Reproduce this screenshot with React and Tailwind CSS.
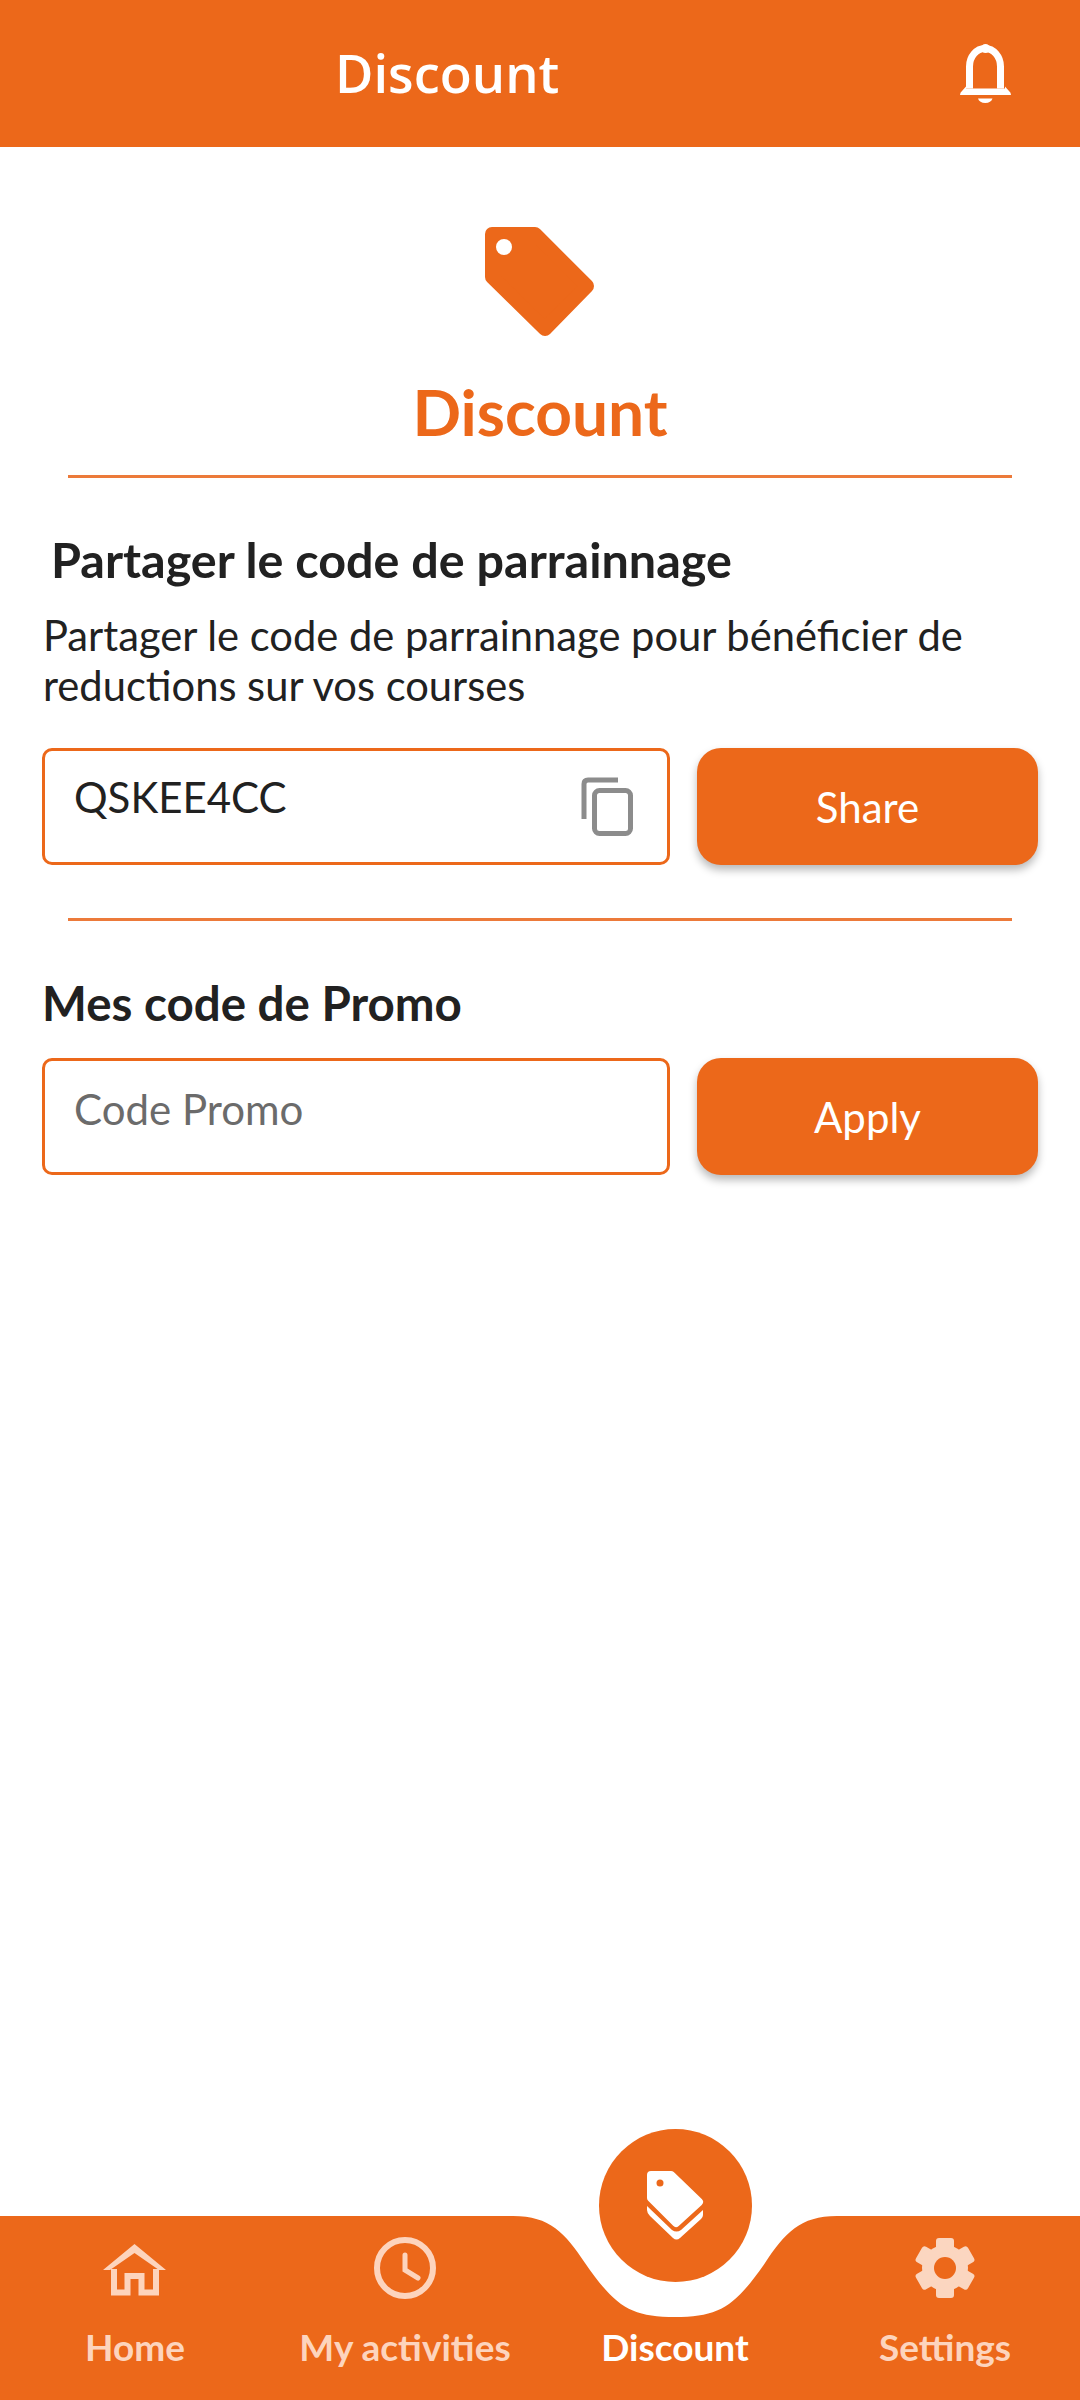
const TagIcon = ({ className }) => (
  <svg viewBox="0 0 110 110" className={className}>
    <path
      d="M7 7 H50 L102 59 L60 102 L7 50 Z"
      fill="#ec681a"
      stroke="#ec681a"
      strokeWidth="14"
      strokeLinejoin="round"
    />
    <circle cx="19" cy="20" r="8" fill="#fff" />
  </svg>
)

const BellIcon = () => (
  <svg viewBox="0 3.500 120 100" className="w-[120px] h-[100px]" fill="#fff">
    <circle cx="56.5" cy="28" r="4.5" />
    <path d="M40.500 68 V46 a15.500 18 0 0 1 31 0 V68" fill="none" stroke="#fff" strokeWidth="7" />
    <path d="M31 74.5 Q31 72 33 70.5 L37 66 V68 H76 V66 L80 70.5 Q82 72 82 74.5 Z" />
    <path d="M49 78 H63.500 a7.500 6 0 0 1 -14.500 0 Z" />
  </svg>
)

const CopyIcon = () => (
  <svg viewBox="0 0 80 70" className="w-[80px] h-[70px]" fill="none" stroke="#8c8c8c" strokeWidth="5">
    <path d="M14 50 V15 Q14 11 18 11 H48" />
    <rect x="24.500" y="21.500" width="36" height="43" rx="5" />
  </svg>
)

const HomeIcon = () => (
  <svg viewBox="5 0 80 70" className="w-[80px] h-[70px]" fill="none" stroke="#fdd4bd">
    <path d="M24 36 V59.500 H37.500 V43 H51.500 V59.500 H66 V36" strokeWidth="6" />
    <path d="M13 37 L44.500 11 L76 37 H69 L44.500 20 L20 37 Z" fill="#fdd4bd" strokeWidth="0" />
  </svg>
)

const ClockIcon = () => (
  <svg viewBox="0 0 70 70" className="w-[70px] h-[70px]" fill="none" stroke="#fdd4bd" strokeLinecap="round">
    <circle cx="35" cy="35" r="28" strokeWidth="6" />
    <path d="M35 22 V37 L48 45" strokeWidth="5" />
  </svg>
)

const GearIcon = () => (
  <svg viewBox="0 0 70 70" className="w-[70px] h-[70px]" fill="#fbd6c0">
    <circle cx="35" cy="35" r="23" />
    {[0, 60, 120, 180, 240, 300].map((deg) => (
      <rect key={deg} x="26" y="5" width="18" height="16" rx="3" transform={`rotate(${deg} 35 35)`} />
    ))}
    <circle cx="35" cy="35" r="11" fill="#ec681a" />
  </svg>
)

const StackedTags = () => (
  <svg viewBox="6 0 80 90" className="w-[80px] h-[90px]" fill="#fff">
    <path
      d="M21 14 H41 L69 41 L46 62 L21 37 Z"
      stroke="#fff"
      strokeWidth="8"
      strokeLinejoin="round"
    />
    <circle cx="30" cy="22" r="3.500" fill="#ec681a" />
    <path d="M17 45 L42 69 Q46.500 72 51 69 L73 49 V54 Q73 56 71 58 L50 77 Q46.500 80 43 77 L20 55 Q17 52 17 49 Z" />
  </svg>
)

const CodeRow = ({ children, button }) => (
  <div className="flex gap-[27px]">
    <div className="relative w-[628px] h-[117px] border-[3px] border-[#ec681a] rounded-[10px] bg-white">
      {children}
    </div>
    <button className="w-[341px] h-[117px] pt-[2px] rounded-[24px] bg-[#ec681a] text-white text-[42px] shadow-[0_5px_8px_rgba(0,0,0,0.28)]">
      {button}
    </button>
  </div>
)

const navItems = [
  { label: 'Home', icon: <HomeIcon /> },
  { label: 'My activities', icon: <ClockIcon /> },
  { label: 'Discount', active: true },
  { label: 'Settings', icon: <GearIcon /> },
]

const App = () => (
  <div className="flex flex-col w-[1080px] h-[2400px] bg-white font-['Lato',sans-serif] text-[#212121]">
    <header className="flex items-center justify-between h-[147px] bg-[#ec681a] pl-[335px] pr-[31px] shrink-0">
      <h1 className="font-['Open_Sans',sans-serif] font-semibold text-[52.5px] text-white">Discount</h1>
      <BellIcon />
    </header>

    <main className="flex-1 px-[42px]">
      <div className="flex flex-col items-center pt-[80px]">
        <TagIcon className="w-[110px] h-[110px]" />
        <h2 className="font-bold text-[64px] leading-[80px] text-[#ec681a] mt-[35px]">
          Discount
        </h2>
      </div>
      <div className="h-[3px] bg-[#ec7a3a] mx-[26px] mt-[23px]" />

      <h3 className="font-bold text-[48.5px] leading-[56px] pl-[9px] mt-[53px]">Partager le code de parrainnage</h3>
      <p className="text-[41.7px] leading-[50px] mt-[23px] pl-px">
        Partager le code de parrainnage pour bénéficier de reductions sur vos courses
      </p>
      <div className="mt-[38px]">
        <CodeRow button="Share">
          <input
            readOnly
            value="QSKEE4CC"
            className="w-full h-full pl-[29px] pr-[100px] pb-[20px] text-[42px] text-[#212121] outline-none bg-transparent"
          />
          <div className="absolute top-[18px] left-[525px]">
            <CopyIcon />
          </div>
        </CodeRow>
      </div>

      <div className="h-[3px] bg-[#ec7a3a] mx-[26px] mt-[53px]" />

      <h3 className="font-bold text-[47.5px] leading-[56px] mt-[54px]">Mes code de Promo</h3>
      <div className="mt-[27px]">
        <CodeRow button="Apply">
          <input
            placeholder="Code Promo"
            className="w-full h-full pl-[29px] pb-[16px] text-[42px] outline-none bg-transparent placeholder:text-[#6b6b6b]"
          />
        </CodeRow>
      </div>
    </main>

    <nav className="relative h-[184px] shrink-0">
      <svg viewBox="0 0 1080 184" className="absolute inset-0 w-full h-full">
        <path
          d="M0 0 H513 C550 0 565 17 585 47 C615 90 630 101 675 101 C720 101 735 90 765 47 C785 17 800 0 837 0 H1080 V184 H0 Z"
          fill="#ec681a"
        />
      </svg>
      <div className="absolute left-[599px] top-[-87px] flex items-center justify-center w-[153px] h-[153px] rounded-full bg-[#ec681a]">
        <StackedTags />
      </div>
      <div className="relative grid grid-cols-4 h-full">
        {navItems.map((item) => (
          <div key={item.label} className="flex flex-col items-center">
            <div className="flex items-center justify-center h-[70px] mt-[17px]">{item.icon}</div>
            <span
              className={`font-bold text-[37px] leading-[44px] mt-[22px] ${item.active ? 'text-white' : 'text-[#fdd4bd]'}`}
            >
              {item.label}
            </span>
          </div>
        ))}
      </div>
    </nav>
  </div>
)

export default App
